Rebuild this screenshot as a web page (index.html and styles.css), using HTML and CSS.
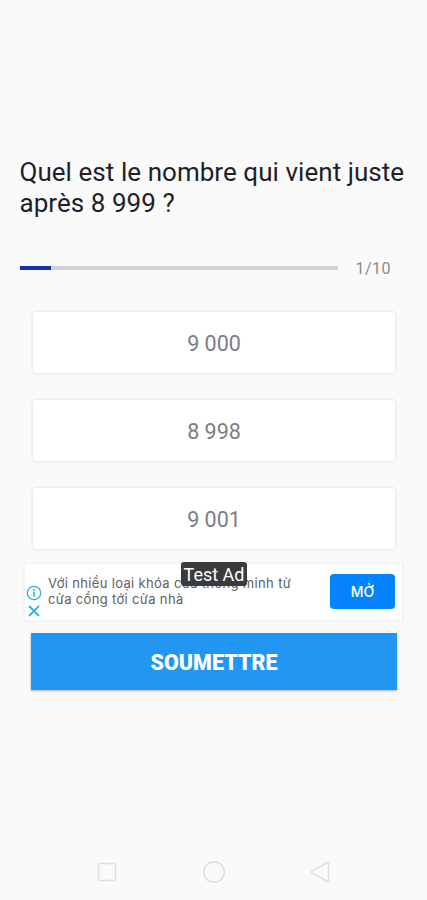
FILE: index.html
```html
<!DOCTYPE html>
<html lang="fr">
<head>
<meta charset="utf-8">
<title>Quiz</title>
<link rel="stylesheet" href="styles.css">
</head>
<body>
<main class="screen">
  <h1 class="question">Quel est le nombre qui vient juste<br>après 8 999 ?</h1>
  <div class="progress">
    <div class="track"><div class="fill" style="width:10%"></div></div>
    <span class="count">1/10</span>
  </div>
  <div class="answers">
    <button class="answer">9 000</button>
    <button class="answer">8 998</button>
    <button class="answer">9 001</button>
  </div>
  <aside class="ad" lang="vi">
    <div class="ad-marks">
      <svg width="16" height="16" viewBox="0 0 16 16"><circle cx="8" cy="8" r="6.7" fill="none" stroke="#35b2d8" stroke-width="1.3"/><path d="M8 6.8v5M8 4v1.7" stroke="#35b2d8" stroke-width="1.7"/></svg>
      <svg width="16" height="16" viewBox="0 0 16 16"><path d="M3 3l10 10M13 3L3 13" stroke="#35b2d8" stroke-width="1.8"/></svg>
    </div>
    <p class="ad-text">Với nhiều loại khóa cửa thông minh từ<br>cửa cổng tới cửa nhà</p>
    <button class="ad-open">MỞ</button>
    <span class="test-label">Test Ad</span>
  </aside>
  <button class="submit">SOUMETTRE</button>
  <nav class="system-nav">
    <svg width="24" height="24" viewBox="0 0 24 24"><rect x="3.5" y="3.5" width="17" height="17" rx="2"/></svg>
    <svg width="24" height="24" viewBox="0 0 24 24"><circle cx="12" cy="12" r="10.3"/></svg>
    <svg width="24" height="24" viewBox="0 0 24 24"><path d="M20.500 3.500v17q0 1.600-1.500.8L4.100 12.800q-1.200-.9 0-1.700L19 2.700q1.500-.8 1.500.8z"/></svg>
  </nav>
</main>
</body>
</html>
```
FILE: styles.css
```css
* {
  box-sizing: border-box;
}

body {
  margin: 0;
  background: #fafafa;
  font-family: Roboto, "Liberation Sans", sans-serif;
}

button {
  display: block;
  border: 0;
  padding: 0;
  font-family: inherit;
}

.screen {
  display: flex;
  flex-direction: column;
  height: 900px;
  padding-top: 157px;
  overflow: hidden;
}

.question {
  height: 62px;
  margin: 0 0 0 19.500px;
  font-size: 26px;
  line-height: 30.5px;
  font-weight: 400;
  letter-spacing: 0.03px;
  word-spacing: 0.1px;
  color: #1f1f29;
  white-space: nowrap;
}

.progress {
  display: flex;
  align-items: center;
  gap: 18px;
  height: 20px;
  margin: 39px 0 0 19.500px;
}

.track {
  width: 318px;
  height: 4px;
  margin-top: -1px;
  background: #d3d3d3;
}

.fill {
  height: 100%;
  background: #1431b5;
}

.count {
  padding-top: 1px;
  font-size: 16px;
  letter-spacing: 0.5px;
  color: #8b8b8b;
}

.answers {
  display: flex;
  flex-direction: column;
  gap: 23px;
  margin: 32px 30px 0 31px;
}

.answer {
  height: 65px;
  padding-top: 1px;
  border: 2px solid #f0f0f0;
  border-radius: 6px;
  background: #fff;
  font-size: 21.5px;
  color: #7b7e82;
}

.ad {
  position: relative;
  display: flex;
  height: 60px;
  margin: 11px 23px 0 23px;
  border: 2px solid #f4f4f4;
  background: #fff;
}

.ad-marks {
  display: flex;
  flex-direction: column;
  gap: 2px;
  width: 23px;
  padding: 21px 0 0 1px;
}

.ad-text {
  flex: 1;
  margin: 12px 0 0;
  font-family: Inter, "Noto Sans", sans-serif;
  font-size: 13px;
  line-height: 15.500px;
  letter-spacing: 0.34px;
  color: #606060;
  white-space: nowrap;
}

.ad-open {
  width: 65px;
  height: 35px;
  margin: 10px 7px 0 0;
  border-radius: 4px;
  background: #0583ff;
  font-family: Inter, "Noto Sans", sans-serif;
  font-size: 14px;
  font-weight: 500;
  color: #fff;
}

.test-label {
  position: absolute;
  top: -2px;
  left: 156px;
  width: 66px;
  height: 24px;
  border-radius: 3px;
  background: #3b3b3b;
  font-size: 18px;
  line-height: 26px;
  text-align: center;
  color: #fff;
  white-space: nowrap;
}

.submit {
  height: 57px;
  margin: 11px 30px 0 31px;
  padding-top: 2px;
  background: #2196f3;
  box-shadow: 0 1px 2px rgba(0, 0, 0, 0.3);
  font-size: 21.5px;
  font-weight: 900;
  color: #fff;
}

.system-nav {
  display: flex;
  justify-content: space-between;
  height: 24px;
  margin: auto 95px 16px;
  fill: none;
  stroke: #dedede;
  stroke-width: 1.5;
}
```
